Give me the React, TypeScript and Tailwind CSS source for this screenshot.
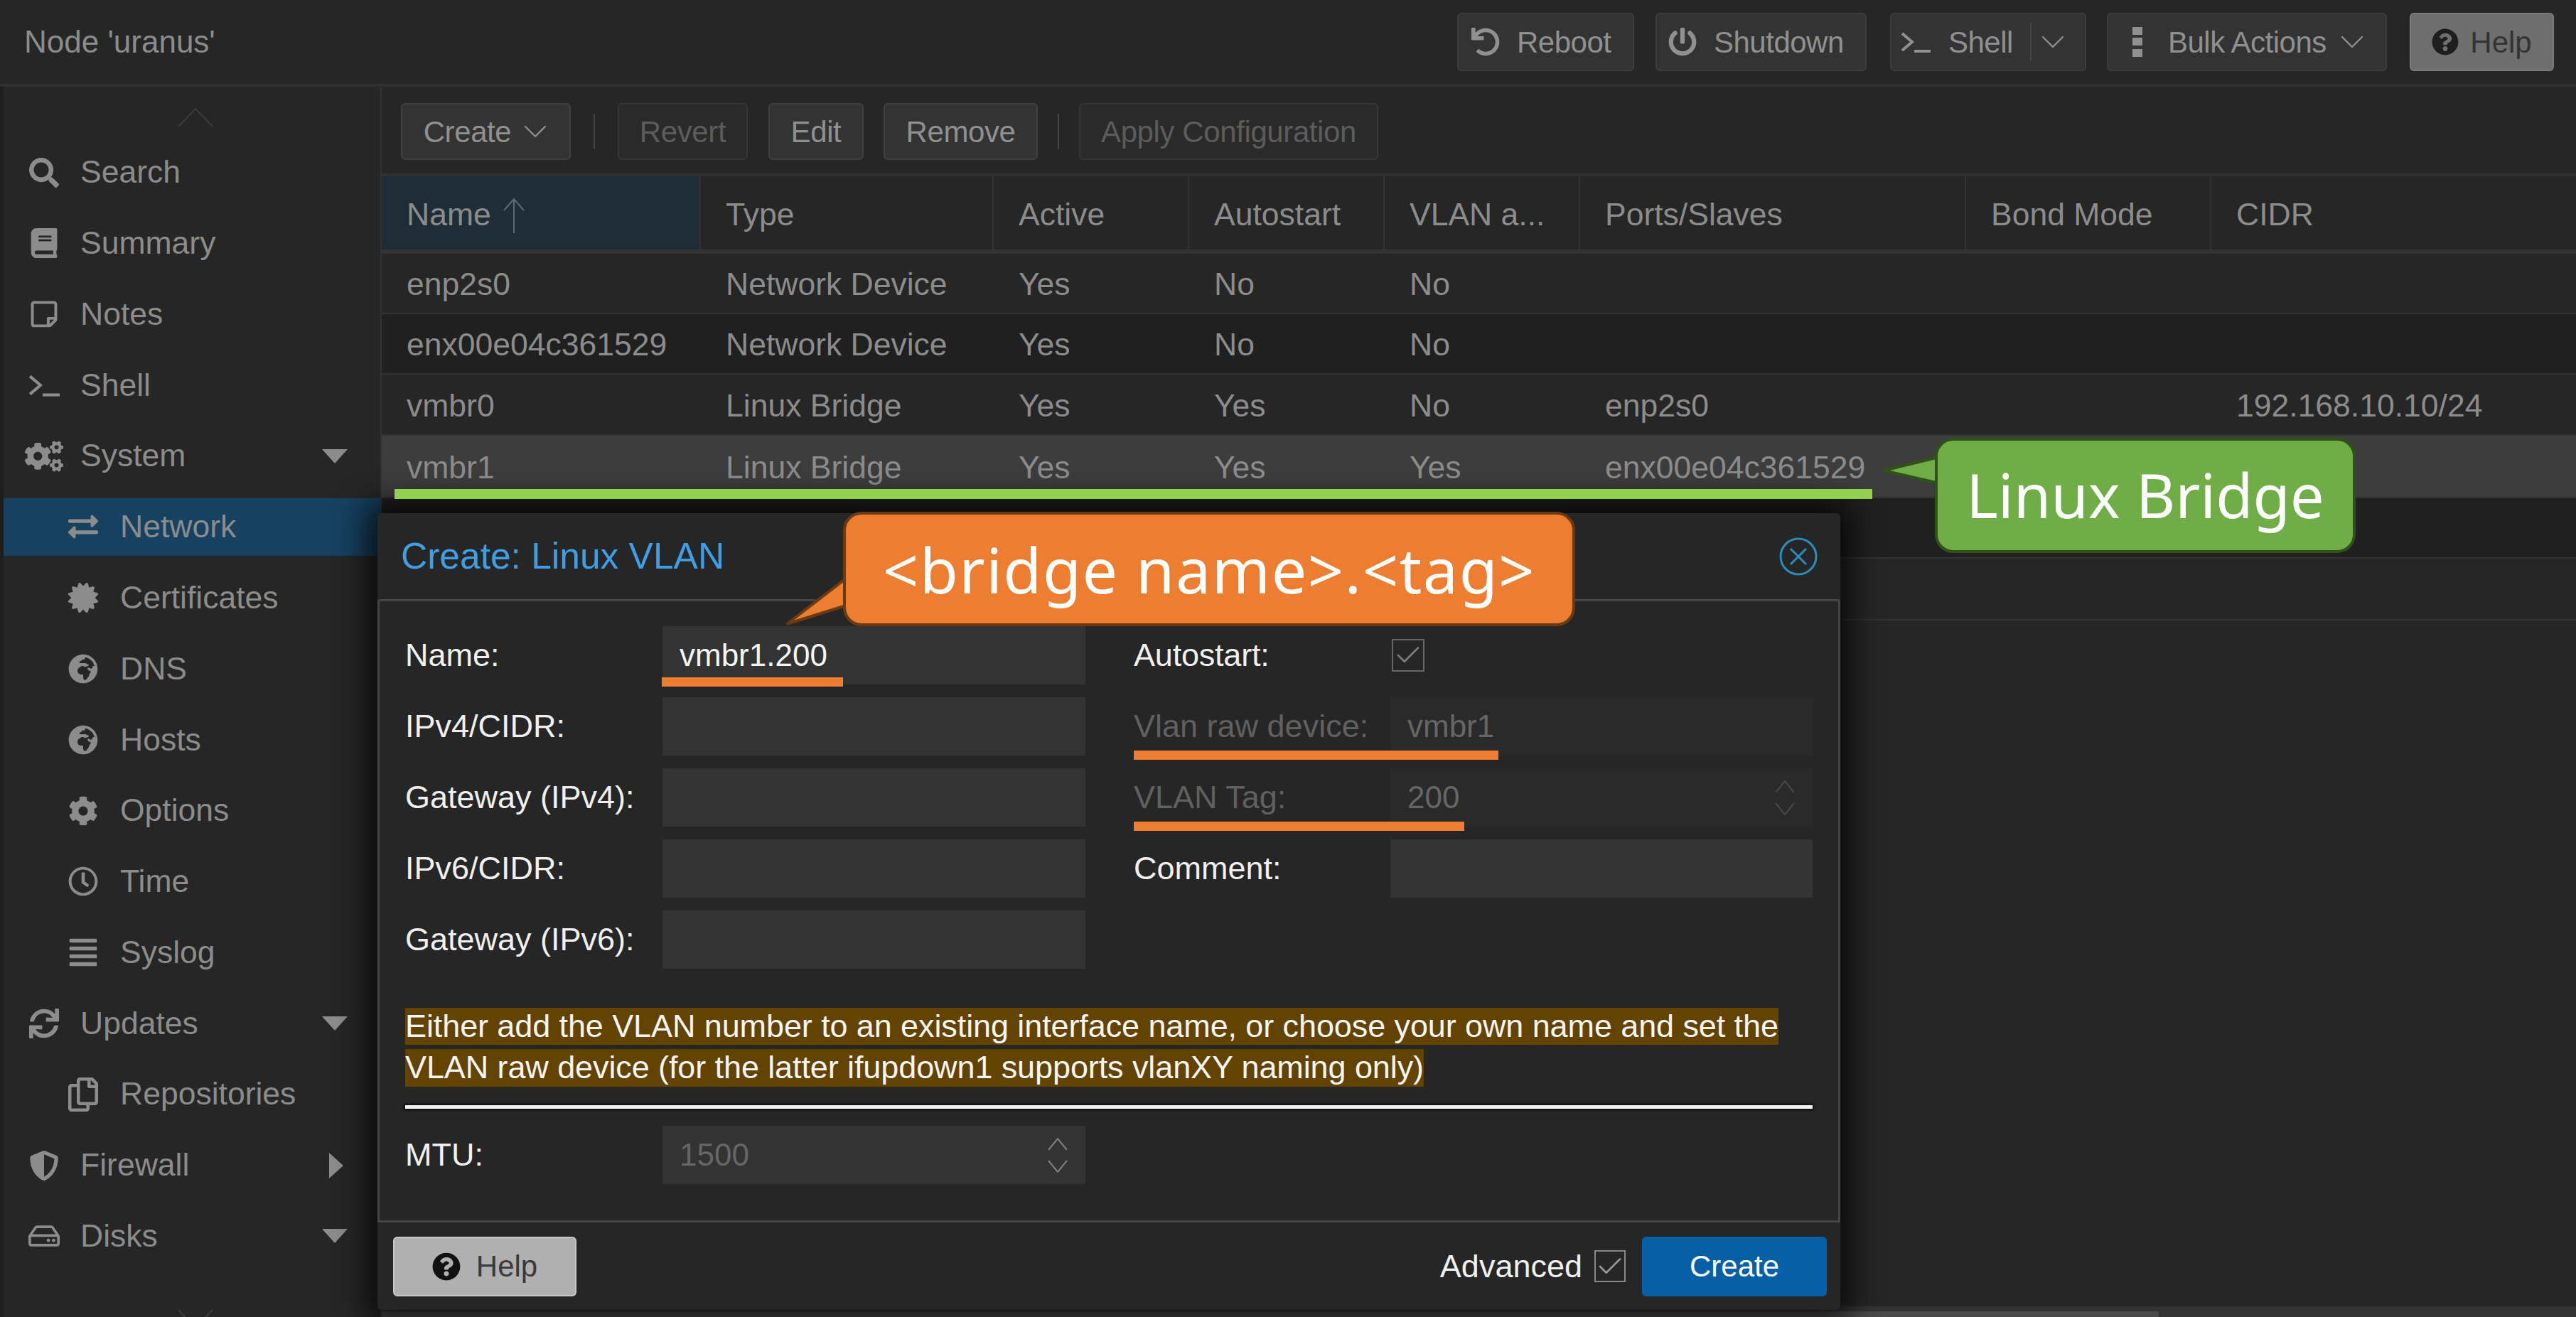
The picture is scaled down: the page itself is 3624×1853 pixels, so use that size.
// Proxmox node network panel with Create: Linux VLAN dialog
import { ReactNode } from "react";
import {
  FaSearch,
  FaBook,
  FaRegStickyNote,
  FaCogs,
  FaExchangeAlt,
  FaCertificate,
  FaGlobeAfrica,
  FaCog,
  FaRegClock,
  FaAlignJustify,
  FaSync,
  FaRegCopy,
  FaShieldAlt,
  FaRegHdd,
  FaUndo,
  FaPowerOff,
  FaQuestionCircle,
} from "react-icons/fa";
import { ChevronDown, Check } from "lucide-react";

function Prompt({ className }: { className?: string }) {
  return (
    <svg viewBox="0 0 44 32" className={className} fill="none" stroke="currentColor" strokeWidth="4">
      <path d="M3 4l14 12L3 28" />
      <path d="M20 29h23" />
    </svg>
  );
}

function Caret() {
  return <ChevronDown className="w-[56px] h-[56px] -mx-[10px] shrink-0" strokeWidth={1} />;
}

function ScrollArrow({ up }: { up?: boolean }) {
  return (
    <svg viewBox="0 0 50 28" className="w-[50px] h-[28px] shrink-0 text-[#3c3c3c]" fill="none" stroke="currentColor" strokeWidth="2">
      <path d={up ? "M1 27L25 2l24 25" : "M1 1l24 25L49 1"} />
    </svg>
  );
}

type NavItem = { label: string; icon: ReactNode; child?: boolean; arrow?: "down" | "right"; active?: boolean };

const iconCls = "w-[42px] h-[42px]";

const navItems: NavItem[] = [
  { label: "Search", icon: <FaSearch className={iconCls} /> },
  { label: "Summary", icon: <FaBook className={iconCls} /> },
  { label: "Notes", icon: <FaRegStickyNote className={iconCls} /> },
  { label: "Shell", icon: <Prompt className="w-[46px] h-[34px]" /> },
  { label: "System", icon: <FaCogs className="w-[54px] h-[46px]" />, arrow: "down" },
  { label: "Network", icon: <FaExchangeAlt className="w-[50px] h-[42px]" />, child: true, active: true },
  { label: "Certificates", icon: <FaCertificate className={iconCls} />, child: true },
  { label: "DNS", icon: <FaGlobeAfrica className={iconCls} />, child: true },
  { label: "Hosts", icon: <FaGlobeAfrica className={iconCls} />, child: true },
  { label: "Options", icon: <FaCog className={iconCls} />, child: true },
  { label: "Time", icon: <FaRegClock className={iconCls} />, child: true },
  { label: "Syslog", icon: <FaAlignJustify className="w-[50px] h-[44px]" />, child: true },
  { label: "Updates", icon: <FaSync className={iconCls} />, arrow: "down" },
  { label: "Repositories", icon: <FaRegCopy className="w-[48px] h-[48px]" />, child: true },
  { label: "Firewall", icon: <FaShieldAlt className={iconCls} />, arrow: "right" },
  { label: "Disks", icon: <FaRegHdd className="w-[44px] h-[42px]" />, arrow: "down" },
];

const columns = [
  { label: "Name", w: "w-[449px]" },
  { label: "Type", w: "w-[412px]" },
  { label: "Active", w: "w-[275px]" },
  { label: "Autostart", w: "w-[275px]" },
  { label: "VLAN a...", w: "w-[275px]" },
  { label: "Ports/Slaves", w: "w-[543px]" },
  { label: "Bond Mode", w: "w-[345px]" },
  { label: "CIDR", w: "w-[513px]" },
];

const rows = [
  { cells: ["enp2s0", "Network Device", "Yes", "No", "No", "", "", ""], bg: "bg-[#262626]", h: "h-[85px]" },
  { cells: ["enx00e04c361529", "Network Device", "Yes", "No", "No", "", "", ""], bg: "bg-[#202020]", h: "h-[85px]" },
  { cells: ["vmbr0", "Linux Bridge", "Yes", "Yes", "No", "enp2s0", "", "192.168.10.10/24"], bg: "bg-[#262626]", h: "h-[86px]" },
  { cells: ["vmbr1", "Linux Bridge", "Yes", "Yes", "Yes", "enx00e04c361529", "", ""], bg: "bg-[#3d3d3d]", h: "h-[88px]" },
  { cells: ["", "", "", "", "", "", "", ""], bg: "bg-[#202020]", h: "h-[85px]" },
  { cells: ["", "", "", "", "", "", "", ""], bg: "bg-[#262626]", h: "h-[87px]" },
];

function TopButton({ children, cls }: { children: ReactNode; cls: string }) {
  return (
    <div className={`${cls} h-[82px] flex items-center rounded-[6px] border-2 border-[#3d3d3d] bg-[#333333] text-[#909090] text-[42px] tracking-[-0.5px]`}>
      {children}
    </div>
  );
}

function ToolButton({ label, w, disabled, caret }: { label: string; w: string; disabled?: boolean; caret?: boolean }) {
  return (
    <div
      className={`${w} h-[80px] flex items-center justify-center gap-[16px] rounded-[6px] border-2 text-[42px] tracking-[-0.4px] ${
        disabled ? "border-[#363636] bg-[#2a2a2a] text-[#5c5c5c]" : "border-[#404040] bg-[#333333] text-[#909090]"
      }`}
    >
      {label}
      {caret && <Caret />}
    </div>
  );
}

function Field({
  label,
  value,
  disabled,
  spin,
  dimLabel,
  labelCls = "w-[362px]",
}: {
  label: string;
  value?: string;
  disabled?: boolean;
  spin?: boolean;
  dimLabel?: boolean;
  labelCls?: string;
}) {
  return (
    <div className="flex items-center h-[82px]">
      <div className={`${labelCls} shrink-0 text-[45px] ${dimLabel ? "text-[#606060]" : "text-[#f0f0f0]"}`}>{label}</div>
      <div className={`flex-1 h-full flex items-center justify-between pl-[24px] pr-[25px] ${dimLabel ? "bg-[#2a2a2a]" : "bg-[#333333]"}`}>
        <span className={`text-[44px] ${disabled ? "text-[#666666]" : "text-[#f5f5f5]"}`}>{value}</span>
        {spin && (
          <svg viewBox="0 0 28 49" className={`w-[28px] h-[49px] ${dimLabel ? "text-[#484848]" : "text-[#808080]"}`} fill="none" stroke="currentColor" strokeWidth="2">
            <path d="M1 17L14 1l13 16M1 32l13 16 13-16" />
          </svg>
        )}
      </div>
    </div>
  );
}

export default function App() {
  return (
    <div className="relative w-[3624px] h-[1853px] overflow-hidden bg-[#262626] font-['Liberation_Sans',Arial,sans-serif]">
      {/* top bar */}
      <div className="h-[122px] flex items-center border-b-4 border-[#303030] pl-[34px] pr-[31px]">
        <div className="text-[44px] text-[#8c8c8c] flex-1">Node 'uranus'</div>
        <TopButton cls="w-[249px] pl-[18px] gap-[24px]">
          <FaUndo className="w-[40px] h-[44px] shrink-0" /> Reboot
        </TopButton>
        <TopButton cls="ml-[30px] w-[297px] pl-[16px] gap-[24px]">
          <FaPowerOff className="w-[40px] h-[46px] shrink-0" /> Shutdown
        </TopButton>
        <TopButton cls="ml-[33px] w-[276px] pl-[12px] gap-[24px]">
          <Prompt className="w-[44px] h-[34px] shrink-0" /> Shell
          <span className="w-[2px] h-[54px] bg-[#444444]" />
          <span className="-ml-[12px]">
            <Caret />
          </span>
        </TopButton>
        <TopButton cls="ml-[29px] w-[394px] pl-[34px]">
          <svg viewBox="0 0 14 42" className="w-[14px] h-[42px] shrink-0 mr-[36px]" fill="currentColor">
            <rect width="14" height="11" />
            <rect y="15" width="14" height="11" />
            <rect y="31" width="14" height="11" />
          </svg>
          Bulk Actions
          <span className="ml-[18px]">
            <Caret />
          </span>
        </TopButton>
        <div className="ml-[32px] w-[203px] h-[82px] flex items-center justify-center gap-[16px] rounded-[6px] bg-[#6e6e6e] border-2 border-[#7c7c7c] text-[#333333] text-[42px]">
          <FaQuestionCircle className="w-[38px] h-[38px] text-[#1e1e1e]" /> Help
        </div>
      </div>

      <div className="flex h-[1731px]">
        {/* sidebar */}
        <div className="w-[537px] shrink-0 border-r-2 border-[#333333] border-l-[5px] border-l-[#1e1e1e] flex flex-col">
          <div className="h-[80px] shrink-0 flex justify-center pt-[29px] pl-[10px]">
            <ScrollArrow up />
          </div>
          <div className="shrink-0 flex flex-col gap-[18.8px]">
            {navItems.map((item) => (
              <div
                key={item.label}
                className={`h-[81px] flex items-center text-[44.5px] text-[#8c8c8c] ${item.active ? "bg-[#164160]" : ""}`}
              >
                <span className={`flex justify-center shrink-0 ${item.child ? "ml-[85px] w-[54px]" : "ml-[30px] w-[54px]"}`}>{item.icon}</span>
                <span className={`flex-1 ${item.child ? "ml-[25px]" : "ml-[24px]"}`}>{item.label}</span>
                {item.arrow === "down" && (
                  <span className="mr-[46px] w-0 h-0 border-x-[18px] border-x-transparent border-t-[20px] border-t-[#8c8c8c]" />
                )}
                {item.arrow === "right" && (
                  <span className="mr-[52px] w-0 h-0 border-y-[18px] border-y-transparent border-l-[20px] border-l-[#8c8c8c]" />
                )}
              </div>
            ))}
          </div>
          <div className="mt-[62px] shrink-0 flex justify-center pl-[10px]">
            <ScrollArrow />
          </div>
        </div>

        {/* main */}
        <div className="flex-1 flex flex-col">
          <div className="h-[126px] shrink-0 flex items-center pl-[27px] pt-[4px] border-b-4 border-[#303030]">
            <ToolButton label="Create" w="w-[239px]" caret />
            <span className="mx-[32px] w-[2px] h-[50px] bg-[#444444]" />
            <ToolButton label="Revert" w="w-[183px]" disabled />
            <span className="w-[29px]" />
            <ToolButton label="Edit" w="w-[134px]" />
            <span className="w-[28px]" />
            <ToolButton label="Remove" w="w-[217px]" />
            <span className="mx-[28px] w-[2px] h-[50px] bg-[#444444]" />
            <ToolButton label="Apply Configuration" w="w-[421px]" disabled />
          </div>
          <div className="flex h-[109px] shrink-0 border-b-[6px] border-[#333333]">
            {columns.map((c, i) => (
              <div
                key={c.label}
                className={`${c.w} shrink-0 flex items-center pl-[35px] pt-[6px] text-[44.5px] text-[#8c8c8c] ${i === 0 ? "bg-[#1f2d38]" : ""} ${i === 7 ? "" : "border-r-2 border-[#333333]"}`}
              >
                {c.label}
                {i === 0 && (
                  <svg viewBox="0 0 32 50" className="ml-[16px] w-[32px] h-[50px] text-[#5f6a70]" fill="none" stroke="currentColor" strokeWidth="2">
                    <path d="M16 50V2M2 18L16 2l14 16" />
                  </svg>
                )}
              </div>
            ))}
          </div>
          {rows.map((row, r) => (
            <div key={r} className={`flex items-center shrink-0 ${row.h} ${row.bg} border-b-2 border-[#333333]`}>
              {row.cells.map((cell, i) => (
                <div key={i} className={`${columns[i].w} shrink-0 pl-[35px] pt-[4px] text-[44.5px] text-[#8c8c8c] whitespace-nowrap`}>
                  {cell}
                </div>
              ))}
            </div>
          ))}
          <div className="flex-1" />
          <div className="h-[15px] shrink-0 bg-[#333333] pt-[7px]">
            <div className="w-[2500px] h-[8px] bg-[#4a4a4a]" />
          </div>
        </div>
      </div>

      {/* dialog */}
      <div className="absolute left-[531px] top-[722px] w-[2058px] h-[1121px] flex flex-col rounded-[6px] bg-[#262626] shadow-[0_0_44px_16px_rgba(0,0,0,0.75)]">
        <div className="h-[121px] shrink-0 flex items-center justify-between pl-[33px] pr-[31px]">
          <span className="text-[51.5px] text-[#3f9fe6]">Create: Linux VLAN</span>
          <svg viewBox="0 0 56 56" className="w-[56px] h-[56px] text-[#2a8dbd]" fill="none" stroke="currentColor" strokeWidth="3">
            <circle cx="28" cy="28" r="25" />
            <path d="M17 17l22 22M39 17L17 39" />
          </svg>
        </div>
        <div className="flex-1 flex flex-col border-t-[3px] border-x-[3px] border-[#444444] pt-[35px] px-[36px]">
          <div className="flex gap-[68px]">
            <div className="w-[957px] flex flex-col gap-[18px]">
              <Field label="Name:" value="vmbr1.200" />
              <Field label="IPv4/CIDR:" />
              <Field label="Gateway (IPv4):" />
              <Field label="IPv6/CIDR:" />
              <Field label="Gateway (IPv6):" />
            </div>
            <div className="w-[955px] flex flex-col gap-[18px]">
              <div className="flex items-center h-[82px]">
                <div className="w-[363px] text-[45px] tracking-[-0.2px] text-[#f0f0f0]">Autostart:</div>
                <div className="w-[46px] h-[46px] border-2 border-[#666666] flex items-center justify-center">
                  <Check className="w-[42px] h-[42px] shrink-0 text-[#7d7d7d]" strokeWidth={1.5} />
                </div>
              </div>
              <Field label="Vlan raw device:" value="vmbr1" disabled dimLabel labelCls="w-[361px]" />
              <Field label="VLAN Tag:" value="200" disabled dimLabel spin labelCls="w-[361px]" />
              <Field label="Comment:" labelCls="w-[361px]" />
            </div>
          </div>
          <div className="mt-[55px] text-[45px] text-[#f5f5f5] tracking-[-0.1px]">
            <div className="w-fit h-[52px] leading-[52px] bg-[#624400] mb-[6px] whitespace-nowrap">
              Either add the VLAN number to an existing interface name, or choose your own name and set the
            </div>
            <div className="w-fit h-[53px] leading-[52px] bg-[#624400] whitespace-nowrap">
              VLAN raw device (for the latter ifupdown1 supports vlanXY naming only)
            </div>
          </div>
          <div className="mt-[26px] h-[5px] bg-[#f2f2f2] shadow-[0_0_3px_2px_rgba(0,0,0,0.6)]" />
          <div className="mt-[24px] w-[957px]">
            <Field label="MTU:" value="1500" spin disabled />
          </div>
        </div>
        <div className="h-[126px] shrink-0 flex items-center border-t-[3px] border-[#444444] pl-[22px] pr-[19px]">
          <div className="w-[258px] h-[84px] flex items-center justify-center gap-[22px] rounded-[6px] bg-[#b0b0b0] border-2 border-[#c8c8c8] text-[42px] text-[#3a3a3a]">
            <FaQuestionCircle className="w-[40px] h-[40px] text-[#111111]" /> Help
          </div>
          <div className="flex-1" />
          <span className="text-[45px] text-[#f0f0f0]">Advanced</span>
          <div className="ml-[17px] w-[44px] h-[45px] border-2 border-[#888888] flex items-center justify-center">
            <Check className="w-[42px] h-[42px] shrink-0 text-[#999999]" strokeWidth={1.5} />
          </div>
          <div className="ml-[23px] w-[260px] h-[84px] flex items-center justify-center rounded-[6px] bg-[#0560a8] text-[42px] text-white">
            Create
          </div>
        </div>
      </div>

      {/* annotations over the screenshot */}
      <div className="absolute left-[555px] top-[688px] w-[2079px] h-[14px] bg-[#92d050]" />
      <div className="absolute left-[931px] top-[953px] w-[255px] h-[13px] bg-[#ed7d31]" />
      <div className="absolute left-[1595px] top-[1056px] w-[513px] h-[13px] bg-[#ed7d31]" />
      <div className="absolute left-[1595px] top-[1156px] w-[465px] h-[13px] bg-[#ed7d31]" />

      <svg viewBox="0 0 100 80" className="absolute left-[1100px] top-[806px] w-[100px] h-[80px]">
        <path d="M90 8L7 72L90 46" fill="#ed7d31" stroke="#6b3a12" strokeWidth="4" />
      </svg>
      <div className="absolute left-[1186px] top-[720px] w-[1030px] h-[161px] flex items-center justify-center rounded-[26px] bg-[#ed7d31] border-4 border-[#6b3a12] text-[88px] tracking-[1.5px] text-white font-['Noto_Sans',sans-serif]">
        &lt;bridge name&gt;.&lt;tag&gt;
      </div>

      <svg viewBox="0 0 90 60" className="absolute left-[2644px] top-[632px] w-[90px] h-[60px]">
        <path d="M84 11L6 30L84 48" fill="#70ad47" stroke="#2f5218" strokeWidth="4" />
      </svg>
      <div className="absolute left-[2722px] top-[616px] w-[592px] h-[162px] flex items-center justify-center rounded-[26px] bg-[#70ad47] border-4 border-[#2f5218] text-[85px] text-white font-['Noto_Sans',sans-serif]">
        Linux Bridge
      </div>
    </div>
  );
}
